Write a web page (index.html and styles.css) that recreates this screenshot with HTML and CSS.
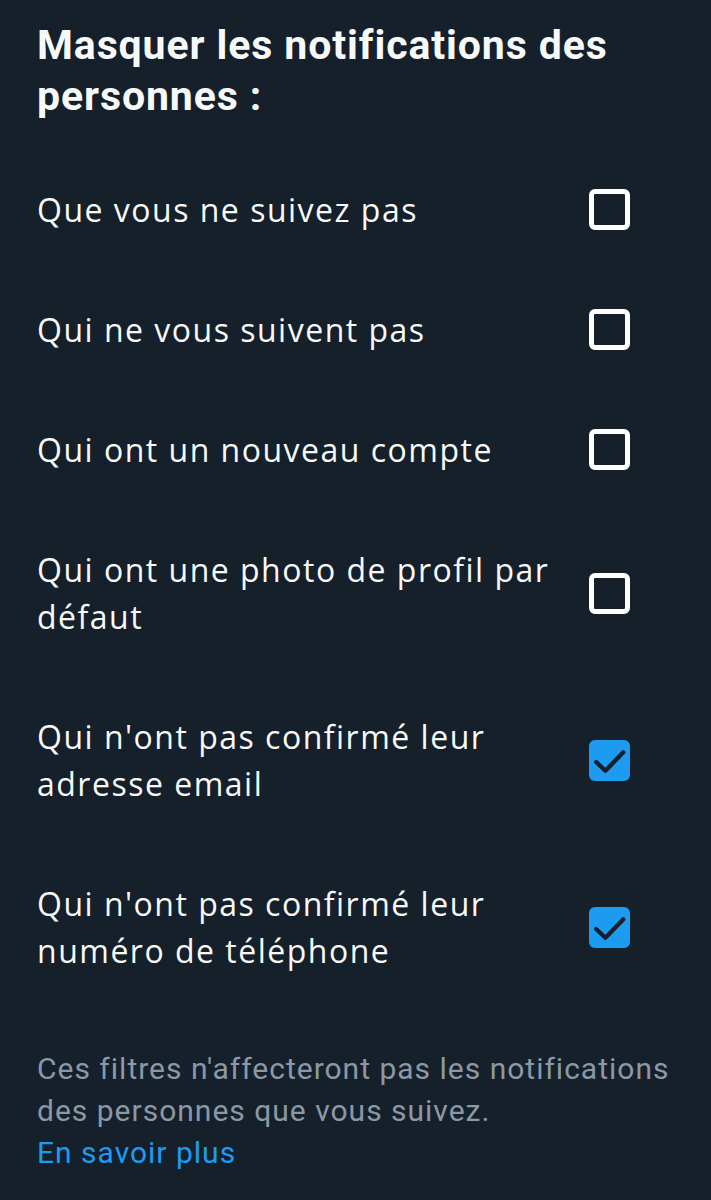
FILE: index.html
```html
<!DOCTYPE html>
<html lang="fr">
<head>
    <meta charset="UTF-8">
    <title>Notifications</title>
    <link rel="stylesheet" href="styles.css">
</head>
<body>
<div class="page">
    <h1 class="title">Masquer les notifications des personnes :</h1>
    <ul class="filters">
        <li><span>Que vous ne suivez pas</span><i class="box"></i></li>
        <li><span>Qui ne vous suivent pas</span><i class="box"></i></li>
        <li><span>Qui ont un nouveau compte</span><i class="box"></i></li>
        <li><span>Qui ont une photo de profil par défaut</span><i class="box"></i></li>
        <li><span>Qui n'ont pas confirmé leur adresse email</span>
            <i class="box checked"><svg viewBox="0 0 40 40"><path d="M7 21.5l9 8.5 17.5-18"/></svg></i></li>
        <li><span>Qui n'ont pas confirmé leur numéro de téléphone</span>
            <i class="box checked"><svg viewBox="0 0 40 40"><path d="M7 21.5l9 8.5 17.5-18"/></svg></i></li>
    </ul>
    <p class="note">Ces filtres n'affecteront pas les notifications des personnes que vous suivez.
        <a href="#">En savoir plus</a></p>
</div>
</body>
</html>
```

FILE: styles.css
```css
* {
    margin: 0;
    padding: 0
}

ul {
    list-style: none
}

html, body {
    background: #15202b;
}

.page {
    padding: 20px 81px 0 37px;
    height: 1180px;
    color: #f7f9f9;
    font-family: "Open Sans", Roboto, sans-serif;
}

.title {
    font-family: Roboto, sans-serif;
    font-size: 41px;
    line-height: 51px;
    font-weight: 700;
    letter-spacing: 0.9px;
    width: 610px;
}

.filters {
    margin-top: 28px;
}

.filters li {
    display: flex;
    align-items: center;
    justify-content: space-between;
    padding: 36px 0 37px;
}

.filters span {
    font-size: 32px;
    line-height: 47px;
    letter-spacing: 1.5px;
    width: 525px;
}

.box { /*方框*/
    flex: none;
    width: 41px;
    height: 41px;
    box-sizing: border-box;
    border: 5px solid #fff;
    border-radius: 6px;
    display: flex;
    align-items: center;
    justify-content: center;
}

.box.checked {
    background: #1d9bf0;
    border: 0;
}

.box svg {
    width: 41px;
    height: 41px;
    fill: none;
    stroke: #15202b;
    stroke-width: 4.2;
    stroke-linecap: round;
    stroke-linejoin: round;
}

.note {
    margin-top: 37px;
    font-family: Roboto, sans-serif;
    font-size: 30px;
    line-height: 42px;
    letter-spacing: 1px;
    color: #8b98a5;
    margin-right: -40px;
}

.note a {
    display: block;
    color: #1d9bf0;
    text-decoration: none;
}
```
